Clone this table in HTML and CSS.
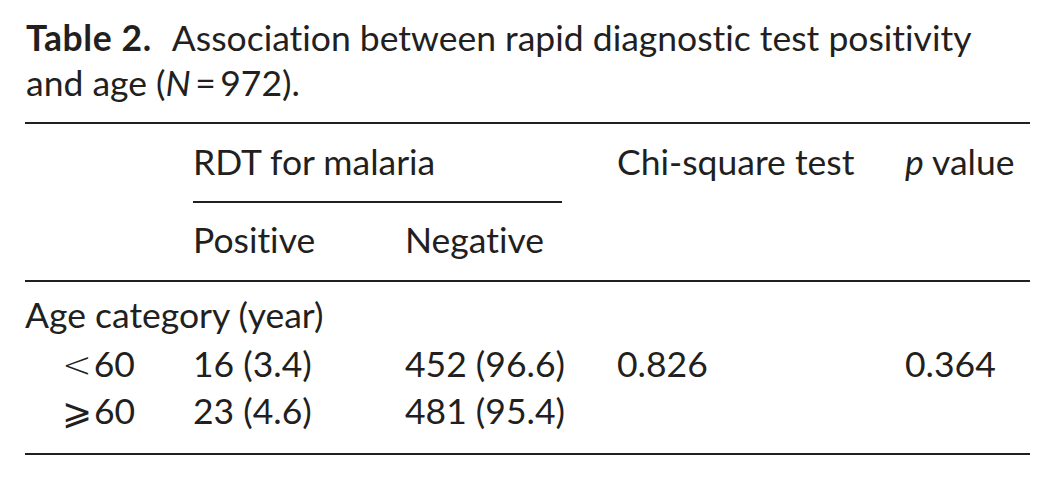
FILE: index.html
```html
<!DOCTYPE html>
<html lang="en">
<head>
<meta charset="utf-8">
<title>Table 2</title>
<link rel="stylesheet" href="styles.css">
</head>
<body>
<div class="page">
  <p class="caption"><b class="label">Table 2.</b><span class="gap"></span>Association between rapid diagnostic test positivity and age (<i>N</i>&#8201;=&#8201;972).</p>
  <div class="table">
    <div class="cell h1"></div>
    <div class="cell h1 span2"><div class="group">RDT for malaria</div></div>
    <div class="cell h1">Chi-square test</div>
    <div class="cell h1"><i>p</i> value</div>

    <div class="cell h2"></div>
    <div class="cell h2">Positive</div>
    <div class="cell h2">Negative</div>
    <div class="cell h2"></div>
    <div class="cell h2"></div>

    <div class="divider"></div>

    <div class="cell cat full">Age category (year)</div>

    <div class="cell r1 sub"><span class="op">&lt;</span>60</div>
    <div class="cell r1">16 (3.4)</div>
    <div class="cell r1">452 (96.6)</div>
    <div class="cell r1">0.826</div>
    <div class="cell r1">0.364</div>

    <div class="cell r2 sub"><span class="op">&#10878;</span>60</div>
    <div class="cell r2">23 (4.6)</div>
    <div class="cell r2">481 (95.4)</div>
    <div class="cell r2"></div>
    <div class="cell r2"></div>
  </div>
</div>
</body>
</html>
```

FILE: styles.css
```css
html, body {
  margin: 0;
  padding: 0;
  background: #ffffff;
}

body {
  font-family: Lato, "Open Sans", "DejaVu Sans", sans-serif;
  font-size: 35.5px;
  line-height: 45px;
  color: #231f20;
  font-variant-ligatures: none;
}

.page {
  width: 1005px;
  padding: 15px 0 0 25px;
}

.caption {
  margin: 0 0 17px 1px;
  max-width: 985px;
}

.label {
  font-weight: 700;
  letter-spacing: 0.6px;
}

.gap {
  display: inline-block;
  width: 20px;
}

.table {
  display: grid;
  grid-template-columns: 168px 212px 212px 288px 125px;
  border-top: 2px solid #231f20;
  border-bottom: 2px solid #231f20;
}

.cell {
  white-space: nowrap;
}

.span2 {
  grid-column: span 2;
}

.full {
  grid-column: 1 / -1;
}

.h1 {
  padding-top: 15px;
}

.group {
  margin-right: 55px;
  padding-bottom: 17px;
  border-bottom: 2px solid #231f20;
}

.h2 {
  padding-top: 14px;
  padding-bottom: 18px;
}

.divider {
  grid-column: 1 / -1;
  height: 2px;
  background: #231f20;
}

.cat {
  padding-top: 10px;
}

.r1 {
  padding-top: 4px;
}

.r2 {
  padding-top: 1px;
  padding-bottom: 19px;
}

.sub {
  padding-left: 37px;
}

.op {
  font-family: "DejaVu Sans", sans-serif;
  font-weight: 300;
  display: inline-block;
  margin-right: 2px;
}
```
